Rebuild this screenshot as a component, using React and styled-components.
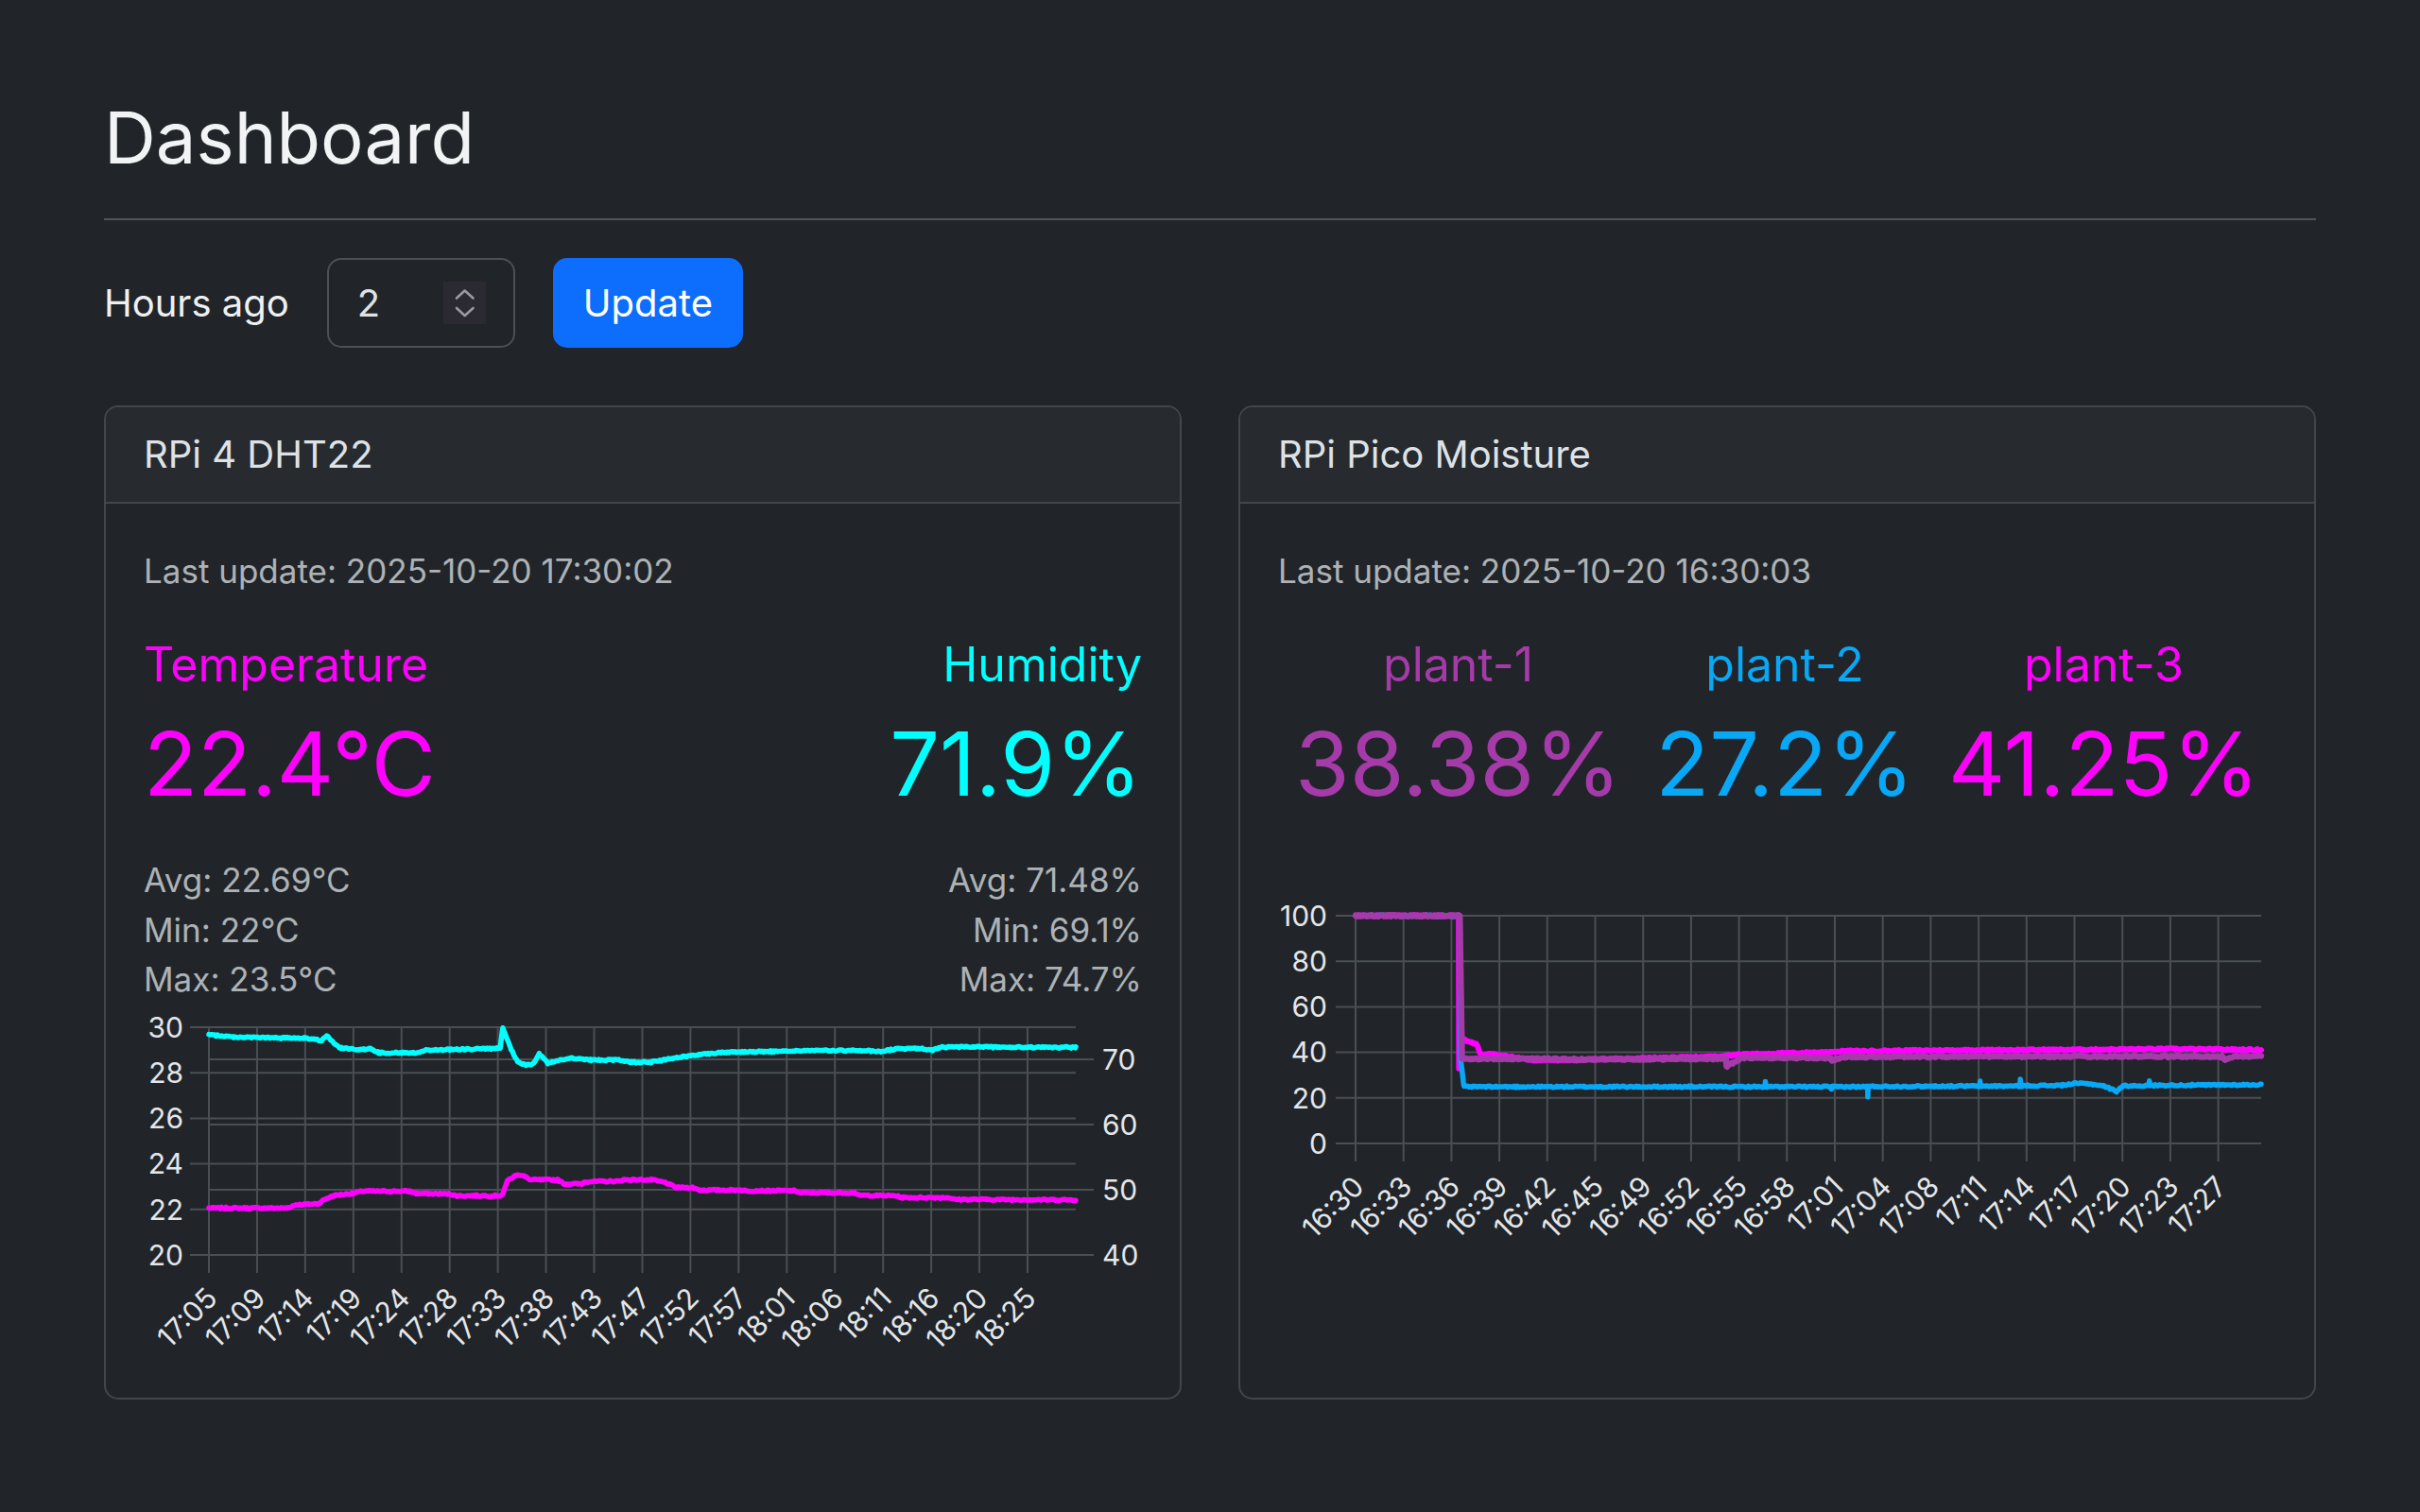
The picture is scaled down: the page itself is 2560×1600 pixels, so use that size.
import React from 'react';
import styled, { createGlobalStyle } from 'styled-components';

const GlobalStyle = createGlobalStyle`
  html, body { margin: 0; padding: 0; background: #212529; }
  body {
    color: #dee2e6;
    font-family: Inter, "Noto Sans", "Liberation Sans", sans-serif;
    font-size: 40px;
    line-height: 1.5;
  }
  *, *::before, *::after { box-sizing: border-box; }
`;

const Page = styled.main`
  width: 2340px;
  margin: 0 auto;
  padding: 100px 0 80px;
`;

const Title = styled.h2`
  margin: 0;
  font-size: 76px;
  font-weight: 400;
  line-height: 1.2;
  color: #f1f3f5;
`;

const Divider = styled.hr`
  margin: 40px 0;
  border: 0;
  border-top: 2px solid rgba(222, 226, 230, 0.25);
`;

const Controls = styled.form`
  display: flex;
  align-items: center;
  gap: 40px;
`;

const FieldLabel = styled.label`
  font-size: 40px;
  line-height: 60px;
  color: #eef0f2;
`;

const NumberWrap = styled.div`
  position: relative;
  width: 199px;
`;

const NumberInput = styled.input`
  display: block;
  width: 100%;
  height: 95px;
  padding: 15px 30px;
  font: inherit;
  color: #dee2e6;
  background: #212529;
  border: 2.5px solid #495057;
  border-radius: 15px;
  outline: none;
  appearance: textfield;
  -moz-appearance: textfield;
  &::-webkit-inner-spin-button,
  &::-webkit-outer-spin-button {
    -webkit-appearance: none;
    margin: 0;
  }
`;

const Spinner = styled.span`
  position: absolute;
  left: 123px;
  top: 25px;
  width: 45px;
  height: 45px;
  background: #2b2a33;
  pointer-events: none;
  display: block;
`;

const PrimaryButton = styled.button`
  height: 95px;
  padding: 15px 30px;
  font: inherit;
  line-height: 60px;
  color: #fff;
  background: #0d6efd;
  border: 2.5px solid #0d6efd;
  border-radius: 15px;
  cursor: pointer;
`;

const CardGrid = styled.div`
  display: grid;
  grid-template-columns: 1fr 1fr;
  gap: 60px;
  margin-top: 61px;
`;

const Card = styled.section`
  display: flex;
  flex-direction: column;
  border: 2px solid #43474b;
  border-radius: 15px;
  background: #212529;
  overflow: hidden;
`;

const CardHeader = styled.header`
  padding: 20px 40px;
  font-size: 40px;
  line-height: 60px;
  background: #272b2f;
  border-bottom: 2px solid #43474b;
`;

const CardBody = styled.div`
  flex: 1;
  padding: 40px;
`;

const Meta = styled.p`
  margin: 0 0 40px;
  color: rgba(222, 226, 230, 0.75);
`;

const MetaText = styled.small`
  font-size: 35px;
`;

const StatsRow = styled.div`
  display: flex;
  justify-content: ${(p) => (p.$around ? 'space-around' : 'space-between')};
  margin-bottom: ${(p) => p.$mb || 0}px;
`;

const Stat = styled.div`
  text-align: ${(p) => p.$align || 'left'};
`;

const StatLabel = styled.h5`
  margin: 0 0 20px;
  font-size: 50px;
  font-weight: 400;
  line-height: 1.2;
  color: ${(p) => p.$color};
`;

const StatValue = styled.h1`
  margin: 0 0 40px;
  font-size: 93.4px;
  font-weight: 400;
  line-height: 1.2;
  color: ${(p) => p.$color};
`;

const Summary = styled.div`
  font-size: 35px;
  line-height: 1.5;
  color: rgba(222, 226, 230, 0.75);
`;

const ChartSvg = styled.svg`
  display: block;
  font-family: Inter, "Noto Sans", "Liberation Sans", sans-serif;
`;

const GRID = '#4a4f55';
const TICK_TEXT = '#e3e6e9';

function buildPath(data, plot, scaleY, jitter, seed) {
  const w = plot.right - plot.left;
  let s = seed;
  const rand = () => {
    s = (s * 1103515245 + 12345) & 0x7fffffff;
    return s / 0x7fffffff;
  };
  const start = data[0][0];
  const end = data[data.length - 1][0];
  const set = new Set();
  for (let x = 0; x <= w; x += 1.5) {
    const f = x / w;
    if (f >= start && f <= end) set.add(f);
  }
  data.forEach(([f]) => set.add(f));
  const fracs = [...set].sort((a, b) => a - b);
  let j = 0;
  const pts = fracs.map((f) => {
    while (j < data.length - 2 && data[j + 1][0] < f) j++;
    const [f0, v0] = data[j];
    const [f1, v1] = data[j + 1];
    const t = f1 === f0 ? 1 : Math.min(1, Math.max(0, (f - f0) / (f1 - f0)));
    let v = v0 + (v1 - v0) * t;
    v += (rand() - 0.5) * 2 * jitter;
    return [plot.left + f * w, scaleY(v)];
  });
  return 'M' + pts.map((p) => `${p[0].toFixed(1)},${p[1].toFixed(1)}`).join('L');
}

function LineChart({ width, height, plot, left, right, xLabels, xStep, series }) {
  const scaleL = (v) => plot.bottom - ((v - left.min) / (left.max - left.min)) * (plot.bottom - plot.top);
  const scaleR = right
    ? (v) => plot.bottom - ((v - right.min) / (right.max - right.min)) * (plot.bottom - plot.top)
    : null;
  const labelY = plot.bottom + 40;
  return (
    <ChartSvg width={width} height={height} viewBox={`0 0 ${width} ${height}`}>
      {left.ticks.map((t) => (
        <g key={`l${t}`}>
          <line x1={left.gridFrom} x2={plot.right} y1={scaleL(t)} y2={scaleL(t)} stroke={GRID} strokeWidth="2" />
          <text x={left.labelX} y={scaleL(t)} dy="0.36em" textAnchor="end" fontSize="30" fill={TICK_TEXT}>
            {t}
          </text>
        </g>
      ))}
      {right &&
        right.ticks.map((t) => (
          <g key={`r${t}`}>
            <line x1={plot.left} x2={right.tickTo} y1={scaleR(t)} y2={scaleR(t)} stroke={GRID} strokeWidth="2" />
            <text x={right.labelX} y={scaleR(t)} dy="0.36em" textAnchor="start" fontSize="30" fill={TICK_TEXT}>
              {t}
            </text>
          </g>
        ))}
      {xLabels.map((lab, i) => {
        const x = plot.left + i * xStep;
        return (
          <g key={lab}>
            <line x1={x} x2={x} y1={plot.top} y2={plot.bottom + 19} stroke={GRID} strokeWidth="2" />
            <text
              transform={`translate(${x + 3} ${labelY}) rotate(-45)`}
              textAnchor="end"
              dy="0.36em"
              fontSize="30"
              fill={TICK_TEXT}
            >
              {lab}
            </text>
          </g>
        );
      })}
      {[...series].reverse().map((s) => (
        <path
          key={s.name}
          d={buildPath(s.data, plot, s.axis === 'right' ? scaleR : scaleL, s.jitter, s.seed)}
          fill="none"
          stroke={s.color}
          strokeWidth={s.width || 5.5}
          strokeLinejoin="round"
          strokeLinecap="round"
        />
      ))}
    </ChartSvg>
  );
}

const MAGENTA = '#ff00ff';
const CYAN = '#00ffff';
const PURPLE = '#a53aa9';
const SKY = '#08a8f6';

const tempData = [
  [0, 22.06], [0.09, 22.06], [0.1, 22.2], [0.126, 22.25], [0.134, 22.45], [0.145, 22.62],
  [0.165, 22.7], [0.177, 22.8], [0.231, 22.8], [0.24, 22.7], [0.278, 22.68], [0.285, 22.6],
  [0.336, 22.6], [0.339, 22.65], [0.344, 23.25], [0.356, 23.54], [0.364, 23.45], [0.371, 23.3],
  [0.402, 23.3], [0.41, 23.12], [0.43, 23.12], [0.434, 23.22], [0.473, 23.24], [0.478, 23.3],
  [0.511, 23.3], [0.527, 23.17], [0.539, 22.96], [0.558, 22.96], [0.566, 22.85], [0.613, 22.85],
  [0.62, 22.82], [0.675, 22.82], [0.683, 22.73], [0.745, 22.73], [0.749, 22.62], [0.792, 22.6],
  [0.8, 22.52], [0.854, 22.52], [0.86, 22.44], [1, 22.42],
];

const humData = [
  [0, 73.77], [0.0285, 73.43], [0.083, 73.29], [0.11, 73.29], [0.13, 72.9], [0.136, 73.62],
  [0.145, 72.3], [0.153, 71.7], [0.18, 71.5], [0.186, 71.69], [0.196, 71.01], [0.239, 71.01],
  [0.25, 71.4], [0.278, 71.5], [0.336, 71.69], [0.339, 74.83], [0.348, 71.69], [0.356, 69.6],
  [0.366, 69.08], [0.375, 69.42], [0.381, 70.87], [0.391, 69.42], [0.418, 70.24], [0.441, 69.9],
  [0.473, 69.9], [0.488, 69.57], [0.511, 69.57], [0.535, 70.14], [0.566, 70.77], [0.597, 71.11],
  [0.652, 71.21], [0.691, 71.35], [0.753, 71.35], [0.776, 71.21], [0.792, 71.59], [0.823, 71.69],
  [0.835, 71.35], [0.842, 71.84], [0.893, 71.93], [0.924, 71.84], [1, 71.84],
];

const plant1Data = [
  [0, 100], [0.115, 100], [0.1175, 37.3], [0.2, 37.2], [0.25, 36.9], [0.35, 37.1], [0.409, 37.3],
  [0.4097, 33.8], [0.4265, 37.6], [0.525, 37.6], [0.5254, 36.6], [0.54, 38.0], [0.7, 38.2],
  [0.957, 38.2], [0.96, 36.8], [0.972, 38.3], [1, 38.3],
];

const plant2Data = [
  [0, 100], [0.115, 100], [0.116, 36.9], [0.1197, 24.9], [0.452, 24.9], [0.4525, 26.9], [0.453, 24.9],
  [0.525, 24.9], [0.5255, 23.5], [0.526, 24.9], [0.5655, 24.9], [0.5657, 20.7], [0.566, 25.0],
  [0.689, 25.2], [0.6897, 27.3], [0.69, 25.2], [0.7337, 25.2], [0.734, 28], [0.7345, 25.3],
  [0.78, 25.5], [0.795, 26.4], [0.81, 26.2], [0.8256, 25.3], [0.8402, 22.9], [0.8475, 25.3],
  [0.876, 25.4], [0.8765, 27.5], [0.877, 25.5], [1, 25.8],
];

const plant3Data = [
  [0, 100], [0.1139, 100], [0.1141, 33.2], [0.1168, 46.3], [0.1226, 45], [0.1336, 43.6],
  [0.1387, 38.7], [0.1517, 39.2], [0.1737, 37.8], [0.1957, 36.6], [0.247, 36.6], [0.2617, 37.0],
  [0.3199, 37.5], [0.3932, 38.1], [0.4298, 39.2], [0.503, 39.9], [0.54, 40.5], [0.6133, 40.8],
  [0.686, 41.0], [0.76, 41.1], [0.9062, 41.5], [1, 41.1],
];

const dhtLabels = [
  '17:05', '17:09', '17:14', '17:19', '17:24', '17:28', '17:33', '17:38', '17:43',
  '17:47', '17:52', '17:57', '18:01', '18:06', '18:11', '18:16', '18:20', '18:25',
];

const picoLabels = [
  '16:30', '16:33', '16:36', '16:39', '16:42', '16:45', '16:49', '16:52', '16:55', '16:58',
  '17:01', '17:04', '17:08', '17:11', '17:14', '17:17', '17:20', '17:23', '17:27',
];

const plants = [
  { name: 'plant-1', value: '38.38%', color: PURPLE },
  { name: 'plant-2', value: '27.2%', color: SKY },
  { name: 'plant-3', value: '41.25%', color: MAGENTA },
];

function SpinnerIcon() {
  return (
    <svg width="45" height="45" viewBox="0 0 45 45">
      <polyline points="14,17.5 22.7,9.5 31.5,17.5" fill="none" stroke="#9a98a6" strokeWidth="2.6" strokeLinecap="round" strokeLinejoin="round" />
      <polyline points="14,28 22.7,36 31.5,28" fill="none" stroke="#9a98a6" strokeWidth="2.6" strokeLinecap="round" strokeLinejoin="round" />
    </svg>
  );
}

export default function App() {
  return (
    <>
      <GlobalStyle />
      <Page>
        <Title>Dashboard</Title>
        <Divider />
        <Controls onSubmit={(e) => e.preventDefault()}>
          <FieldLabel htmlFor="hours">Hours ago</FieldLabel>
          <NumberWrap>
            <NumberInput id="hours" type="number" defaultValue={2} min={1} />
            <Spinner>
              <SpinnerIcon />
            </Spinner>
          </NumberWrap>
          <PrimaryButton type="submit">Update</PrimaryButton>
        </Controls>

        <CardGrid>
          <Card>
            <CardHeader>RPi 4 DHT22</CardHeader>
            <CardBody>
              <Meta>
                <MetaText>Last update: 2025-10-20 17:30:02</MetaText>
              </Meta>
              <StatsRow>
                <Stat $align="left">
                  <StatLabel $color={MAGENTA}>Temperature</StatLabel>
                  <StatValue $color={MAGENTA}>22.4°C</StatValue>
                  <Summary>
                    <div>Avg: 22.69°C</div>
                    <div>Min: 22°C</div>
                    <div>Max: 23.5°C</div>
                  </Summary>
                </Stat>
                <Stat $align="right">
                  <StatLabel $color={CYAN}>Humidity</StatLabel>
                  <StatValue $color={CYAN}>71.9%</StatValue>
                  <Summary>
                    <div>Avg: 71.48%</div>
                    <div>Min: 69.1%</div>
                    <div>Max: 74.7%</div>
                  </Summary>
                </Stat>
              </StatsRow>
              <LineChart
                width={1056}
                height={376}
                plot={{ left: 69, right: 986, top: 24, bottom: 265 }}
                left={{ min: 20, max: 30, ticks: [30, 28, 26, 24, 22, 20], labelX: 42, gridFrom: 49 }}
                right={{ min: 40, max: 74.93, ticks: [70, 60, 50, 40], labelX: 1014, tickTo: 1005 }}
                xLabels={dhtLabels}
                xStep={50.94}
                series={[
                  { name: 'temp', data: tempData, axis: 'left', color: MAGENTA, jitter: 0.035, seed: 7 },
                  { name: 'hum', data: humData, axis: 'right', color: CYAN, jitter: 0.12, seed: 19 },
                ]}
              />
            </CardBody>
          </Card>

          <Card>
            <CardHeader>RPi Pico Moisture</CardHeader>
            <CardBody>
              <Meta>
                <MetaText>Last update: 2025-10-20 16:30:03</MetaText>
              </Meta>
              <StatsRow $around $mb={40}>
                {plants.map((p) => (
                  <Stat key={p.name} $align="center">
                    <StatLabel $color={p.color}>{p.name}</StatLabel>
                    <StatValue $color={p.color}>{p.value}</StatValue>
                  </Stat>
                ))}
              </StatsRow>
              <LineChart
                width={1056}
                height={373}
                plot={{ left: 82, right: 1040, top: 24, bottom: 265 }}
                left={{ min: 0, max: 100, ticks: [100, 80, 60, 40, 20, 0], labelX: 52, gridFrom: 61 }}
                xLabels={picoLabels}
                xStep={50.7}
                series={[
                  { name: 'p1', data: plant1Data, axis: 'left', color: PURPLE, jitter: 0.35, seed: 3, width: 6.5 },
                  { name: 'p2', data: plant2Data, axis: 'left', color: SKY, jitter: 0.35, seed: 11 },
                  { name: 'p3', data: plant3Data, axis: 'left', color: MAGENTA, jitter: 0.35, seed: 23, width: 6 },
                ]}
              />
            </CardBody>
          </Card>
        </CardGrid>
      </Page>
    </>
  );
}
